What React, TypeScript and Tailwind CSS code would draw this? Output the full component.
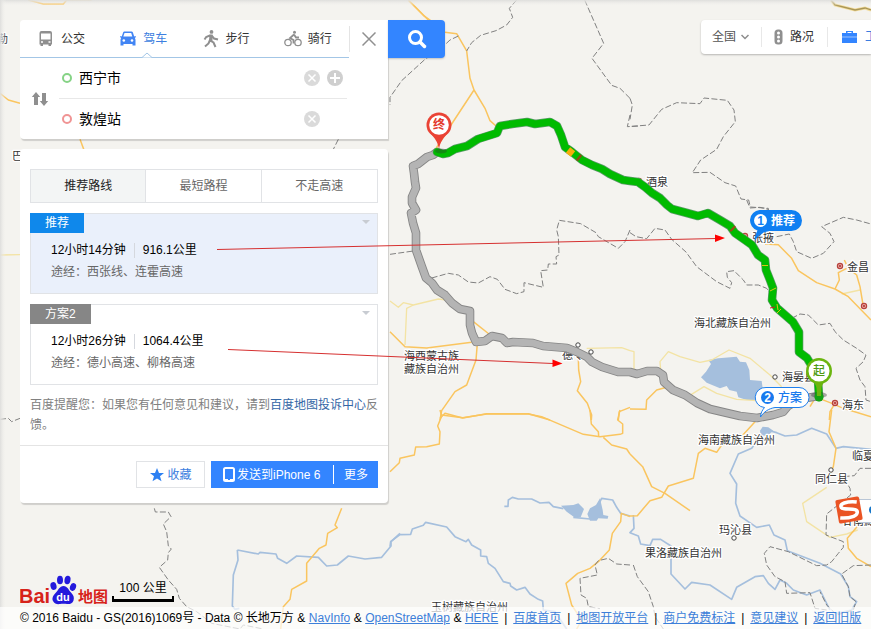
import React from "react";

type Pt = { x: number; y: number };

const font =
  "font-['Liberation_Sans','Noto_Sans_CJK_SC',sans-serif]";

/* ---------- map ---------- */

type TileProps = Pt & {
  borders?: string[];
  roads?: string[];
  lanes?: string[];
  rivers?: string[];
  lakes?: string[];
};

/* Each tile is stored at three units to a pixel. */
function Tile({ x, y, borders = [], roads = [], lanes = [], rivers = [], lakes = [] }: TileProps) {
  return (
    <g transform={`translate(${x} ${y}) scale(0.33333)`} fill="none" strokeLinejoin="round">
      {lakes.map((p) => (
        <polygon key={p} points={p} fill="#a5bfdd" />
      ))}
      {rivers.map((p) => (
        <polyline key={p} points={p} stroke="#a5bfdd" strokeWidth="5" />
      ))}
      {lanes.map((p) => (
        <polyline key={p} points={p} stroke="#f3e3a4" strokeWidth="4" />
      ))}
      {roads.map((p) => (
        <polyline key={p} points={p} stroke="#fac55f" strokeWidth="4.5" />
      ))}
      {borders.map((p) => (
        <polyline key={p} points={p} stroke="#808080" strokeWidth="3" strokeDasharray="18 7" />
      ))}
    </g>
  );
}

const tiles: TileProps[] = [
  {
    x: 390, y: 0,
    borders: [
      "380,0 358,25 368,52 350,75 318,92 272,106 245,128 230,153",
      "205,108 180,120 150,148 105,178 35,242 0,292 0,315",
      "584,0 641,130 606,175 665,256 690,265 720,295",
      "720,345 712,380 750,378",
    ],
    roads: ["55,0 100,46 122,62", "165,97 200,101 230,153 240,235 252,270 285,325 300,362 318,378", "252,270 185,372 135,450"],
  },
  {
    x: 630, y: 0,
    borders: [
      "0,295 7,315 0,358",
      "5,379 57,375 95,328 140,308 210,311 222,294 292,301 312,330 316,365 280,410 260,448 212,480 187,518 240,517 285,548 317,558 333,597 356,600 361,621 415,625 416,670",
    ],
    roads: [],
  },
  {
    x: 390, y: 200,
    borders: [
      "0,163 70,153",
      "125,234 175,220 205,225 235,246 265,249 300,230 322,238 345,268 380,281 402,275 402,248 460,262 452,212 473,210 475,192 500,192 498,170 507,165 505,110 500,90 508,61 572,71 618,98 625,110 685,145 705,125 720,90",
    ],
    roads: [
      "0,395 45,440 110,444 245,427",
      "250,365 297,402", "262,430 258,480 230,555 195,575 155,632 150,660",
      "565,475 566,510 572,545 562,572 592,610 605,645 604,660",
      "150,655 165,640 218,654 290,641 415,641 480,660",
      "685,660 688,635 720,622",
    ],
    lanes: ["0,303 25,322 40,308 70,315 145,297 170,300", "70,315 50,325 45,435", "590,445 695,443 720,452"],
  },
  {
    x: 630, y: 200,
    borders: [
      "0,98 18,110 50,116 75,85 105,90 125,118 168,156 200,200 260,245 300,265 305,248 292,232 290,215 312,212 340,240 350,255 385,255 410,265 425,285",
      "350,0 360,24 390,22 415,28 418,60",
      "440,110 478,102 490,125 500,155 545,175 580,160 612,125 600,100 575,80 640,52 680,60 723,72",
      "485,355 510,342 535,345 565,375 600,370 615,395 640,420 680,445 708,465 700,485 678,505 690,540 705,560 708,600 723,605",
    ],
    roads: [
      "405,132 445,134 485,175 505,212 560,248 615,267 655,290 723,360",
      "615,267 628,240 625,218 650,205", "643,180 655,205 680,225 690,260 700,320",
      "567,595 600,608 640,625 723,650", "615,610 600,635 598,660", "555,595 540,620",
      "115,560 80,570 50,600 48,628 0,627",
    ],
    lanes: [
      "92,510 90,485 115,455 150,470 210,487 245,480 297,450 360,475 420,525 455,560",
      "0,452 12,455 12,510", "165,595 222,560 260,580 320,598 380,602", "635,282 690,270",
    ],
    lakes: ["235,480 265,475 320,470 330,485 348,487 358,510 360,540 395,543 398,565 405,600 350,600 325,592 320,575 298,570 290,558 270,565 230,548 213,532 228,515 243,492"],
  },
  {
    x: 390, y: 410,
    borders: ["720,465 680,462 655,445 625,452 615,465 622,495 570,505 573,555 590,565 595,590 630,596"],
    roads: [
      "150,0 155,18 143,48 150,65 148,102 110,110 77,111 73,135 30,145 28,158 0,185",
      "155,15 218,23 290,12 415,12 455,20 580,73 630,80 690,73 698,70 698,42 683,30 690,0",
      "600,0 604,42 625,65 626,78", "640,82 665,105 710,117 720,132",
      "720,320 694,310 692,335 667,370 658,420 625,455 600,475 563,490 528,520 545,585 575,630 560,657",
    ],
    rivers: [
      "0,410 2,395 30,374 62,373 67,357 100,346 107,337 170,351 195,380 228,395 235,388 245,405 272,420 272,438 290,440 295,460 315,475 340,515 360,520 362,528 380,540 405,532 420,552 445,568 458,573 460,600 495,605 530,657",
      "343,289 354,289 355,270 367,262 385,267 425,267 450,279 477,277 490,290 520,296",
      "550,322 600,327", "625,285 635,265 668,270 680,292 692,310 720,318",
    ],
    lakes: ["513,287 550,285 565,280 582,297 572,322 553,322 530,305", "592,312 600,295 618,285 630,265 638,300 640,315 655,318 653,326 625,325 620,332 600,332"],
  },
  {
    x: 630, y: 410,
    borders: [
      "723,175 690,175 673,197 640,200 660,235 662,255 590,312 588,375 640,395 640,412 625,430 605,455 590,465 560,467 475,425 420,410 403,430 410,465 435,500 465,515 470,550 540,548 555,595 590,600",
      "10,465 22,500 55,545 70,590 75,620 100,657",
      "723,465 670,467 635,492 655,530 660,560 678,575 670,600 620,615 590,585 570,545",
    ],
    roads: [
      "0,132 38,170 65,230 105,250 180,302",
      "0,318 22,317 60,272 95,262 115,228 190,205 205,130 225,115 260,127 275,105 320,95 380,30",
      "605,0 597,65 618,115 610,170 600,190", "683,348 652,385 655,415 680,445 723,470",
    ],
    lanes: ["590,232 518,280 530,335 600,382 650,372 683,360"],
    rivers: [
      "400,68 365,115 325,132 300,190 320,222 317,280 330,318 380,352 418,345 432,375 465,390 472,422 570,460 632,492 655,530 660,560 680,575 665,600 620,610",
      "410,60 440,68 465,78 500,75 545,55 590,72 618,115 640,110 723,118",
      "10,315 12,355 0,368 25,378 32,402 60,407 68,388 92,388 123,408 123,492 165,537 185,517 240,525 305,568 320,532 375,500 400,497 415,520 435,538 450,510 470,520 490,540 530,555 570,540 600,600",
    ],
    lakes: ["390,62 398,50 415,52 430,62 412,77 392,76"],
  },
  {
    x: 0, y: 500,
    borders: ["463,25 466,36 505,36 513,50 490,72 500,95 505,138 514,147 505,158 503,180 478,202 505,240 530,268 538,295 560,320 590,335 635,370 720,387 730,375 790,387"],
    roads: ["1025,25 1005,75 1012,83 983,100 978,135 958,145 920,190 920,243 875,268 870,298 850,320 842,387"],
    rivers: ["712,150 775,162 780,157 828,162 833,175 860,190 890,168 955,172 980,198 1012,195 1045,168 1095,177 1145,172 1173,138 1173,125 1200,100", "712,150 714,180 700,225 697,318 705,328 718,325"],
  },
  {
    x: 0, y: 0,
    borders: ["1015,418 998,452"],
    roads: ["85,0 130,12 190,12 200,0 275,0", "0,280 25,300 60,310", "240,418 252,450", "1225,0 1285,60"],
  },
  { x: 0, y: 145, lanes: ["0,330 60,329"] },
  { x: 0, y: 295, borders: ["0,373 25,370 35,380 60,370"], roads: [] },
];

const greenRoute =
  "437,152 443,154 448,153 455,149 467,146 478,139 497,133 499,128 500,126 512,124 527,122 535,124 550,122 557,126 561,135 565,147 572,152 582,160 592,165 602,169 610,174 623,180 630,181 638,182 645,187 652,193 660,198 667,205 672,209 687,213 698,216 708,213 720,220 730,226 735,233 745,240 752,245 758,255 765,260 766,270 770,280 773,288 772,300 777,308 785,315 793,322 799,332 799,352 807,358 813,368 818,380 819,397";
const greyRoute =
  "437,152 433,155 427,157 418,164 413,166 414,173 415,182 416,188 412,197 412,203 416,210 411,213 413,223 416,233 416,250 422,267 426,278 432,283 437,290 445,295 452,303 460,309 470,311 470,325 472,333 476,342 485,341 492,336 502,338 507,343 513,342 533,343 543,346 567,348 577,352 587,357 592,362 602,367 618,372 630,372 637,374 647,371 657,371 663,375 664,382 673,390 685,395 697,403 710,409 727,413 740,416 757,418 773,415 783,412 788,406 800,399 819,396";

const places: (Pt & { name: string })[] = [
  { x: -3, y: 43, name: "勒" },
  { x: 12, y: 160, name: "巴" },
  { x: 646, y: 186, name: "酒泉" },
  { x: 752, y: 242, name: "张掖" },
  { x: 847, y: 271, name: "金昌" },
  { x: 694, y: 327, name: "海北藏族自治州" },
  { x: 404, y: 360, name: "海西蒙古族" },
  { x: 404, y: 373, name: "藏族自治州" },
  { x: 562, y: 359, name: "德令" },
  { x: 782, y: 381, name: "海晏县" },
  { x: 842, y: 409, name: "海东" },
  { x: 698, y: 444, name: "海南藏族自治州" },
  { x: 852, y: 460, name: "临夏" },
  { x: 815, y: 483, name: "同仁县" },
  { x: 719, y: 534, name: "玛沁县" },
  { x: 645, y: 557, name: "果洛藏族自治州" },
  { x: 431, y: 611, name: "玉树藏族自治州" },
  { x: 842, y: 525, name: "甘南藏" },
];

const towns: Pt[] = [
  { x: 578, y: 345 }, { x: 591, y: 352 }, { x: 775, y: 377 }, { x: 831, y: 470 }, { x: 734, y: 538 },
];
const cities: Pt[] = [
  { x: 639, y: 181 }, { x: 745, y: 236 }, { x: 840, y: 266 }, { x: 864, y: 306 }, { x: 835, y: 403 },
];

function MapCanvas() {
  return (
    <svg
      className={`absolute inset-0 h-full w-full ${font}`}
      viewBox="0 0 871 629"
      preserveAspectRatio="xMinYMin slice"
      aria-label="路线地图"
      role="img"
    >
      <defs>
        <linearGradient id="edgeTop" x1="0" y1="0" x2="0" y2="1">
          <stop offset="0" stopColor="#dededc" />
          <stop offset="1" stopColor="#f4f3ef" stopOpacity="0" />
        </linearGradient>
        <linearGradient id="edgeLeft">
          <stop offset="0" stopColor="#dededc" />
          <stop offset="1" stopColor="#f4f3ef" stopOpacity="0" />
        </linearGradient>
      </defs>
      <rect width="871" height="629" fill="#f4f3ef" />
      {tiles.map((t) => (
        <Tile key={`${t.x}-${t.y}`} {...t} />
      ))}
      <polyline points="831,0 835,5 855,10 865,8 871,10" fill="none" stroke="#f3dc9a" strokeWidth="3" />
      <polyline points="831,0 835,5 855,10 865,8 871,10" fill="none" stroke="#a89658" strokeWidth="1.3" />
      {cities.map((c) => (
        <g key={`${c.x}-${c.y}`}>
          <circle cx={c.x} cy={c.y} r="2.6" fill="#e9a9a4" stroke="#b8423c" strokeWidth="1.2" />
          <circle cx={c.x} cy={c.y} r="0.9" fill="#a8201c" />
        </g>
      ))}
      {places.map((p) => (
        <text key={p.name} x={p.x} y={p.y} fontSize="11" fill="#333" stroke="#fff" strokeWidth="2.5" strokeLinejoin="round" paintOrder="stroke">
          {p.name}
        </text>
      ))}
      <g fill="none" strokeLinejoin="round" strokeLinecap="round">
        <polyline points={greyRoute} stroke="#858585" strokeWidth="8.6" />
        <polyline points={greyRoute} stroke="#b4b4b4" strokeWidth="6.8" />
        <polyline points={greenRoute} stroke="#5b9a68" strokeWidth="8.6" />
        <polyline points={greenRoute} stroke="#00bb00" strokeWidth="7.2" />
      </g>
      <g fill="none" strokeWidth="7">
        <path d="M568 150l5 4" stroke="#f5ad0c" />
        <path d="M578 157l2 1.600" stroke="#8a5212" />
        <path d="M732 228l1.500 1.500" stroke="#9a4a18" />
      </g>
      <path d="M762 265.500h6M770 291l6-3M777 304l1 6M777 313l4-4" stroke="#d9c516" strokeWidth="1" fill="none" />
      <path d="M770 308l5-1" stroke="#c22" strokeWidth="1" />
      {towns.map((c) => (
        <circle key={`${c.x}-${c.y}`} cx={c.x} cy={c.y} r="2.200" fill="#fff" stroke="#444" strokeWidth="1" />
      ))}

      {/* destination and origin pins */}
      <ellipse cx="441" cy="151" rx="6" ry="2.500" fill="#333" opacity=".35" />
      <path d="M439 149c-1.500-8-4-10-8-15h16c-4 5-6.500 7-8 15z" fill="#ea4335" />
      <circle cx="439" cy="125" r="12.500" fill="#ea4335" />
      <circle cx="439" cy="125" r="9.800" fill="#fff" />
      <text x="439" y="129" fontSize="12" fontWeight="700" textAnchor="middle" fill="#e33a2d">终</text>

      <ellipse cx="819" cy="395" rx="8" ry="3" fill="#333" opacity=".4" />
      <ellipse cx="819" cy="397" rx="4.500" ry="4.500" fill="#12a312" />
      <path d="M817 396l-.5-8c-.5-4-3.500-6.500-7-10h19c-3.500 3.500-6.500 6-7 10l-.5 8z" fill="#6bb50f" />
      <circle cx="819" cy="371" r="13" fill="#6bb50f" />
      <circle cx="819" cy="371" r="10.500" fill="#fff" />
      <text x="819" y="375" fontSize="12" fontWeight="500" textAnchor="middle" fill="#4e9a10">起</text>

      {/* route bubbles */}
      <path d="M759.500 210h32a10.500 10.500 0 0 1 0 21h-22c-7 1-11 4-15 10 0-5 2-8 3-10.500a10.500 10.500 0 0 1 2-20.500z" fill="#0f7ff2" />
      <circle cx="760.500" cy="220.500" r="6.500" fill="#fff" />
      <text x="760.500" y="225" fontSize="12" fontWeight="700" textAnchor="middle" fill="#0f7ff2">1</text>
      <text x="771" y="225" fontSize="12" fontWeight="700" fill="#fff">推荐</text>
      <path d="M766 387.500h33a10 10 0 0 1 0 20h-24c-6 1-11 4-14.500 9.500 0-4 2-7 4-9.500a10 10 0 0 1 1.500-20z" fill="#fff" stroke="#1f80ee" />
      <circle cx="767.500" cy="397.500" r="6.500" fill="#1779ee" />
      <text x="767.500" y="402" fontSize="12" fontWeight="700" textAnchor="middle" fill="#fff">2</text>
      <text x="778" y="402" fontSize="12" fontWeight="500" fill="#1779ee">方案</text>

      {/* input method badge */}
      <path d="M858 499.500h13v23h-13z" fill="#fff" />
      <path d="M858 499.500h13M858 522.500h13" stroke="#b9c6d6" />
      <circle cx="873" cy="510" r="4" fill="#1676c8" />
      <g transform="rotate(-10 849 510)">
        <rect x="837" y="498" width="24" height="24" rx="2" fill="#ea5424" />
        <path d="M858 503.500c-5-1.500-9-1.700-12.500-1.200-5 .800-5 4.500-1 5.700 3 .900 8 1.500 10.500 2.700 3.500 2 1.500 5.500-2.500 6.300-4.500.8-9 .5-13.500-.7" fill="none" stroke="#fff" strokeWidth="3.500" />
      </g>
      <rect width="871" height="6" fill="url(#edgeTop)" />
      <rect width="6" height="629" fill="url(#edgeLeft)" />
    </svg>
  );
}

/* ---------- icons ---------- */

const BusIcon = () => (
  <svg width="18" height="18" viewBox="0 0 18 18" fill="#8f8f8f" aria-hidden="true">
    <path d="M4.500 1h8.500a2 2 0 0 1 2 2v11.500H14V16h-2.500v-1.500h-5.500V16H3.500v-1.500h-1V3a2 2 0 0 1 2-2z" />
    <path d="M4 3.500h9.500v6H4z" fill="#fff" />
    <path d="M4 11.300h2v1.400H4zM11.500 11.300h2v1.400h-2z" fill="#fff" />
  </svg>
);
const CarIcon = () => (
  <svg width="18" height="18" viewBox="0 0 18 18" fill="#4285f4" aria-hidden="true">
    <path d="M5 1.500h7.500a1.500 1.500 0 0 1 1.400 1l1.300 4 1.200-.5.600 1-1.200.9c.5.600.700 1.300.700 2.100v5.500h-3v-1.500h-9v1.500h-3V10c0-.8.200-1.500.700-2.100L1 7l.6-1 1.200.5 1.300-4a1.500 1.500 0 0 1 .9-1z" />
    <path d="M5.500 3h6.700l1.100 3.500H4.300z" fill="#fff" />
    <circle cx="4.800" cy="10.500" r="1.300" fill="#fff" />
    <circle cx="13" cy="10.500" r="1.300" fill="#fff" />
  </svg>
);
const WalkIcon = () => (
  <svg width="18" height="18" viewBox="0 0 18 18" fill="none" stroke="#8f8f8f" strokeWidth="2" aria-hidden="true">
    <circle cx="9.500" cy="1.900" r="1.900" fill="#8f8f8f" stroke="none" />
    <path d="M9 5L8 10.500l3.500 2 2 4.500M8 10L6.500 13.500 3 16.500M8 5.300L4.200 7 2.500 9.500M9.500 5.500l2.500 3 4 1" />
    <path d="M7.500 4.500h3V11h-3z" fill="#8f8f8f" stroke="none" />
  </svg>
);
const BikeIcon = () => (
  <svg width="18" height="18" viewBox="0 0 18 18" fill="none" stroke="#8f8f8f" strokeWidth="1.300" aria-hidden="true">
    <circle cx="4" cy="12.500" r="3.200" />
    <circle cx="14" cy="12.500" r="3.200" />
    <circle cx="10.500" cy="2.300" r="1.500" fill="#8f8f8f" stroke="none" />
    <path d="M10 4.500L6 8l3.500 2v3.500M10 4.500l2 3h3" strokeWidth="1.800" />
  </svg>
);

function DiscIcon({ plus = false }: { plus?: boolean }) {
  return (
    <svg className="block" width="16" height="16" viewBox="0 0 16 16" aria-hidden="true">
      <circle cx="8" cy="8" r="8" fill={plus ? "#cfcfcf" : "#dadada"} />
      <path
        d={plus ? "M8 3v10M3 8h10" : "M4.500 4.500l7 7M11.500 4.500l-7 7"}
        stroke="#fff"
        strokeWidth={plus ? 2 : 1.5}
      />
    </svg>
  );
}

/* ---------- search card ---------- */

const modes = [
  { name: "公交", Icon: BusIcon },
  { name: "驾车", Icon: CarIcon, active: true },
  { name: "步行", Icon: WalkIcon },
  { name: "骑行", Icon: BikeIcon },
];

function StopField({ id, label, value, ring, add }: { id: string; label: string; value: string; ring: string; add?: boolean }) {
  return (
    <div className="flex h-10 items-center pl-[3px]">
      <span className={`size-[10px] rounded-full border-2 ${ring}`} />
      <label htmlFor={id} className="sr-only">{label}</label>
      <input id={id} defaultValue={value} className="ml-[7px] w-0 flex-1 bg-transparent text-sm text-black outline-none" />
      <button type="button" aria-label={`清除${label}`}><DiscIcon /></button>
      <span className="ml-[7px] flex w-5">
        {add && <button type="button" aria-label="添加途经点"><DiscIcon plus /></button>}
      </span>
    </div>
  );
}

function SearchCard() {
  return (
    <div className="flex items-start">
      <form className="flex w-[368px] rounded-l-sm bg-white shadow-[1px_2px_1px_rgba(0,0,0,0.15)]">
        <div className="w-[329px]">
          <div className="flex h-[38px] border-b border-[#a3c6e6]">
            {modes.map(({ name, Icon, active }) => (
              <button
                key={name}
                type="button"
                className={`relative flex flex-1 items-center gap-[6px] pl-[17px] text-xs ${active ? "text-[#3d7fe0]" : "text-[#333]"}`}
              >
                <Icon />
                {name}
                {active && (
                  <svg className="absolute -bottom-px left-10" width="10" height="6" viewBox="0 0 10 6" aria-hidden="true">
                    <path d="M0 5.500L5 1l5 4.500" fill="#fff" stroke="#a3c6e6" />
                  </svg>
                )}
              </button>
            ))}
          </div>
          <div className="flex">
            <button type="button" aria-label="交换起点终点" className="flex w-[39px] items-center justify-center">
              <svg width="18" height="14" viewBox="0 0 18 14" fill="#8f8f8f" aria-hidden="true">
                <path d="M5 0l4.200 5H7v8H3V5H.8zM13 14L8.800 9H11V1h4v8h2.200z" />
              </svg>
            </button>
            <div className="mr-0.5 flex-1">
              <StopField id="from" label="起点" value="西宁市" ring="border-[#86d386]" add />
              <hr className="border-[#e8e8e8]" />
              <StopField id="to" label="终点" value="敦煌站" ring="border-[#f09494]" />
            </div>
          </div>
        </div>
        <button type="button" aria-label="关闭" className="mt-1.5 flex h-[26px] flex-1 items-center justify-center border-l border-[#e4e4e4]">
          <svg width="14" height="14" viewBox="0 0 14 14" stroke="#909090" strokeWidth="1.500" aria-hidden="true">
            <path d="M.5.5l13 13M13.500.5l-13 13" />
          </svg>
        </button>
      </form>
      <button type="button" aria-label="搜索" className="flex h-[38px] w-[57px] items-center justify-center rounded-r-sm bg-[#3385ff] shadow-[0_1px_2px_rgba(0,0,0,0.2)]">
        <svg width="20" height="20" viewBox="0 0 20 20" fill="none" stroke="#fff" strokeWidth="3" aria-hidden="true">
          <circle cx="8.500" cy="8.500" r="6" />
          <path d="M13 13l4.500 4.500" strokeWidth="3.500" strokeLinecap="round" />
        </svg>
      </button>
    </div>
  );
}

/* ---------- results ---------- */

type Plan = { tag: string; time: string; distance: string; via: string; best?: boolean };

const plans: Plan[] = [
  { tag: "推荐", time: "12小时14分钟", distance: "916.1公里", via: "途经：西张线、连霍高速", best: true },
  { tag: "方案2", time: "12小时26分钟", distance: "1064.4公里", via: "途经：德小高速、柳格高速" },
];

function PlanCard({ tag, time, distance, via, best }: Plan) {
  return (
    <li className={`mt-[10px] h-[81px] border border-[#e1e3e6] ${best ? "bg-[#eaf0fb]" : "bg-white"}`}>
      <div className="flex items-start justify-between">
        <span className={`-mt-px -ml-px h-5 px-[15px] leading-5 text-white ${best ? "bg-[#0f88eb]" : "bg-[#868686]"}`}>{tag}</span>
        <span className="mt-1.5 mr-[7px] border-x-4 border-t-4 border-x-transparent border-t-[#c8ccd2]" />
      </div>
      <div className="mt-[6px] ml-5 flex h-[22px] items-center text-black">
        <span>{time}</span>
        <span className="mx-2 h-[15px] border-l border-[#d5d8de]" />
        <span>{distance}</span>
      </div>
      <p className="ml-5 h-[22px] leading-[22px] text-[#666]">{via}</p>
    </li>
  );
}

function Results() {
  return (
    <section className="mt-[10px] w-[368px] rounded-sm bg-white text-xs shadow-[1px_2px_1px_rgba(0,0,0,0.15)]">
      <div className="px-[10px] pt-5 pb-[10px]">
        <div className="grid h-[34px] grid-cols-3 divide-x divide-[#e1e3e6] border border-[#e1e3e6] text-[#666]">
          <button type="button" className="bg-[#f3f5f5] text-[#222]">推荐路线</button>
          <button type="button">最短路程</button>
          <button type="button">不走高速</button>
        </div>
        <ul>
          {plans.map((p) => (
            <PlanCard key={p.tag} {...p} />
          ))}
        </ul>
        <p className="mt-[10px] -mr-1 leading-5 text-[#808080]">
          百度提醒您：如果您有任何意见和建议，请到
          <a href="#feedback" className="text-[#3366a6]">百度地图投诉中心</a>
          反馈。
        </p>
      </div>
      <div className="flex justify-end gap-1.5 border-t border-[#e4e4e4] px-[10px] py-[15px]">
        <button type="button" className="flex h-[27px] w-[69px] items-center justify-center gap-0.5 border border-[#e1e3e6] text-[#3a7de0]">
          <svg width="16" height="16" viewBox="0 0 16 16" fill="#2e80f2" aria-hidden="true">
            <path d="M8 1l2 5h5l-4 3.300 1.500 5L8 11.500 3.500 14.300l1.500-5L1 6h5z" />
          </svg>
          收藏
        </button>
        <div className="flex h-[27px] items-center bg-[#3385ff] text-white">
          <button type="button" className="flex w-[122px] items-center gap-0.5 pl-3">
            <svg width="12" height="15" viewBox="0 0 12 15" aria-hidden="true">
              <rect x="1" y="1" width="10" height="13" rx="1.500" fill="none" stroke="#fff" strokeWidth="2" />
              <path d="M1 12h4v1h2v-1h4v2H1z" fill="#fff" />
            </svg>
            发送到iPhone 6
          </button>
          <button type="button" className="h-[19px] border-l border-white px-[10px]">更多</button>
        </div>
      </div>
    </section>
  );
}

/* ---------- toolbar and footer ---------- */

function Toolbar() {
  return (
    <nav className="ml-auto flex h-[34px] w-[170px] items-center overflow-hidden rounded-l-sm bg-white text-xs text-[#444] shadow-[0_1px_2px_rgba(0,0,0,0.25)]">
      <button type="button" className="flex h-5 w-[61px] shrink-0 items-center gap-[5px] border-r border-[#e8e8e8] pl-[11px] text-[#555]">
        全国
        <svg width="8" height="6" viewBox="0 0 8 6" fill="none" stroke="#8c8c8c" strokeWidth="1.500" aria-hidden="true">
          <path d="M.5 1L4 4.500 7.500 1" />
        </svg>
      </button>
      <button type="button" className="flex h-5 w-[66px] shrink-0 items-center gap-[7px] border-r border-[#e8e8e8] pl-3 text-[#333]">
        <svg width="9" height="16" viewBox="0 0 9 16" aria-hidden="true">
          <rect x=".5" y=".5" width="8" height="15" rx="3.500" fill="#8f8f8f" />
          <g fill="#fff">
            <circle cx="4.500" cy="4" r="1.500" />
            <circle cx="4.500" cy="8" r="1.500" />
            <circle cx="4.500" cy="12" r="1.500" />
          </g>
        </svg>
        路况
      </button>
      <button type="button" className="flex shrink-0 items-center gap-2 pl-3.5 text-[#3a7de0]">
        <svg width="15" height="14" viewBox="0 0 15 14" fill="#3385ff" aria-hidden="true">
          <path d="M4 3V1h7v2h4v10H0V3zm1.500 0h4V2h-4z" />
          <path d="M0 6.500h15v1H0z" fill="#9cc4ff" />
        </svg>
        工具箱
      </button>
    </nav>
  );
}

const siteLinks = ["百度首页", "地图开放平台", "商户免费标注", "意见建议", "返回旧版"];
const sources = ["NavInfo", "OpenStreetMap", "HERE"];

function Logo() {
  return (
    <svg width="88" height="30" viewBox="0 0 88 30" className={font} role="img" aria-label="Bai du 地图">
      <text x="-1" y="28" fontSize="20" fontWeight="700" fill="#d7231a">Bai</text>
      <g fill="#2319dc">
        <ellipse cx="33.500" cy="11" rx="3" ry="4" transform="rotate(-15 33.500 11)" />
        <ellipse cx="40" cy="5" rx="3" ry="4.300" />
        <ellipse cx="47.500" cy="5" rx="3" ry="4.300" transform="rotate(10 47.500 5)" />
        <ellipse cx="53" cy="12" rx="3" ry="4" transform="rotate(20 53 12)" />
        <path d="M43.500 11c4 0 5 4 7.500 6.500s3.500 5 2.500 8-4 4-6.500 3.500-4.500-.5-7 0-5.500 0-7-3 .500-6 3-8.500 3.500-6.500 7.500-6.500z" />
      </g>
      <text x="43" y="26" fontSize="11" fontWeight="700" textAnchor="middle" fill="#fff">du</text>
      <text x="58" y="27" fontSize="15" fontWeight="700" fill="#d7231a">地图</text>
    </svg>
  );
}

function Footer() {
  return (
    <footer className="text-xs text-black">
      <div className="flex items-end gap-1 pb-0.5 pl-5">
        <Logo />
        <div className="mb-[3px] w-[62px] border-x-2 border-b-[3px] border-black text-center leading-[22px] [border-image:linear-gradient(to_top,black_6px,transparent_6px)_3_2]">
          100 公里
        </div>
      </div>
      <div className="flex h-[22px] items-center bg-white/70 pl-5 whitespace-pre">
        <span>© 2016 Baidu - GS(2016)1069号 - Data © 长地万方</span>
        {sources.map((s) => (
          <React.Fragment key={s}>
            <span className="w-[15px] text-center">&amp;</span>
            <a href={`#${s}`} className="text-[#3d7fd9] underline">{s}</a>
          </React.Fragment>
        ))}
        {siteLinks.map((s) => (
          <React.Fragment key={s}>
            <span className="w-[15px] text-center">|</span>
            <a href={`#${s}`} className="text-[#3d7fd9] underline">{s}</a>
          </React.Fragment>
        ))}
      </div>
    </footer>
  );
}

/* ---------- annotations over the page ---------- */

function Arrows() {
  return (
    <svg className="pointer-events-none absolute inset-0 h-full w-full" viewBox="0 0 871 629" preserveAspectRatio="xMinYMin slice" aria-hidden="true">
      <g stroke="#d63030" fill="#f00">
        <path d="M217 249.500L716 238.500M228 349.500L553 363.500" />
        <path d="M715 234.500l10 3.500-10 4zM552.500 359.500l10 4-10 3.500z" stroke="none" />
      </g>
    </svg>
  );
}

export default function App() {
  return (
    <main className={`relative flex min-h-screen flex-col overflow-hidden bg-[#f4f3ef] ${font}`}>
      <MapCanvas />
      <div className="relative flex items-start pt-5 pl-5">
        <div>
          <SearchCard />
          <Results />
        </div>
        <Toolbar />
      </div>
      <div className="relative mt-auto">
        <Footer />
      </div>
      <Arrows />
    </main>
  );
}
